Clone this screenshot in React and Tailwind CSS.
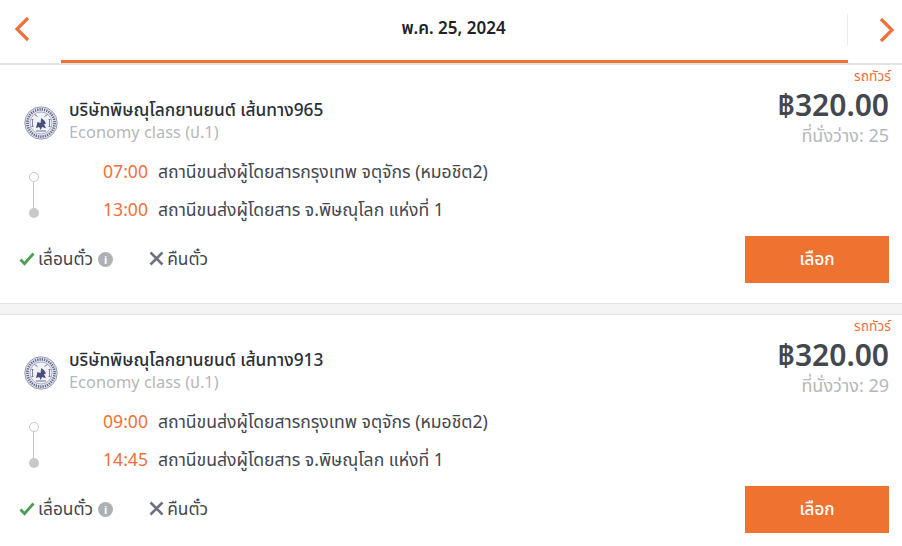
import React from 'react';

const Seal = () => (
  <svg width="34" height="34" viewBox="0 0 34 34" className="shrink-0">
    <circle cx="17" cy="17" r="16.2" fill="#e9ebf1" stroke="#8a8fa8" strokeWidth="0.9" />
    <circle cx="17" cy="17" r="13.6" fill="none" stroke="#62688c" strokeWidth="2.6" strokeDasharray="1.3 1" />
    <circle cx="17" cy="17" r="11" fill="#f1f2f6" stroke="#7b819f" strokeWidth="0.6" />
    <path d="M12 22l1.5-6 3 1 .8-5 3 2.5 1.7 3-2 .8 2 4-4-1.2-1.2 3-1.6-3z" fill="#4a5078" />
    <path d="M10.5 8.5l3 2M23.5 8.5l-3 2M12 25h10" stroke="#6f7596" strokeWidth="1" />
    <path d="M8.5 13.5v7M25.5 13.5v7M7.5 13.5h2M7.5 20.5h2M24.5 13.5h2M24.5 20.5h2" stroke="#6f7596" strokeWidth="0.9" />
  </svg>
);

const Check = () => (
  <svg width="16" height="14" viewBox="0 0 16 14" className="shrink-0">
    <path d="M1.5 7.5l4 4.2L14.5 1.5" fill="none" stroke="#4c9f52" strokeWidth="2.8" />
  </svg>
);

const Cross = () => (
  <svg width="15" height="15" viewBox="0 0 15 15" className="block shrink-0">
    <path d="M1.5 1.5l12 12M13.5 1.5l-12 12" fill="none" stroke="#6b7280" strokeWidth="2.6" />
  </svg>
);

const Info = () => (
  <span className="w-[15px] h-[15px] rounded-full bg-[#adb0b5] text-white text-[11px] font-bold flex items-center justify-center leading-none ml-[5px] mt-[1px]">i</span>
);

const Trip = ({ route, seats, depart, arrive }) => (
  <div className="h-[238px] pl-[19px] pr-[13px] flex flex-col relative">
    <div className="flex justify-between h-[87px]">
      <div className="flex items-start gap-[11px] pl-[5px] pt-[41px]">
        <Seal />
        <div className="flex flex-col mt-[-8px]">
          <span className="text-[17.3px] leading-[24px] font-medium text-[#2b2f36]">บริษัทพิษณุโลกยานยนต์ เส้นทาง{route}</span>
          <span className="text-[16.4px] leading-[22px] text-[#b5b7ba] mt-[-1px]">Economy class (ป.1)</span>
        </div>
      </div>
      <div className="flex flex-col items-end">
        <span className="text-[13.8px] leading-[20px] mt-[1px] mr-[-2px] text-[#f0703a]">รถทัวร์</span>
        <span className="text-[30px] leading-[38px] font-semibold text-[#43474e]">฿320.00</span>
        <span className="text-[18px] leading-[22px] text-[#b5b7ba]">ที่นั่งว่าง: {seats}</span>
      </div>
    </div>
    <div className="flex h-[77px]">
      <div className="w-[31px] flex flex-col items-center ml-[-1px] pt-[20px] mr-[54px]">
        <span className="w-[10px] h-[10px] rounded-full border border-[#c8c8c8] bg-white"></span>
        <span className="w-[1px] h-[26px] bg-[#c8c8c8]"></span>
        <span className="w-[10px] h-[10px] rounded-full bg-[#c8c8c8]"></span>
      </div>
      <div className="flex flex-col text-[17.6px]">
        <div className="flex h-[38px] items-center">
          <span className="w-[55px] text-[#f0703a]">{depart}</span>
          <span className="text-[#43474e]">สถานีขนส่งผู้โดยสารกรุงเทพ จตุจักร (หมอชิต2)</span>
        </div>
        <div className="flex h-[38px] items-center">
          <span className="w-[55px] text-[#f0703a]">{arrive}</span>
          <span className="text-[#43474e]">สถานีขนส่งผู้โดยสาร จ.พิษณุโลก แห่งที่ 1</span>
        </div>
      </div>
    </div>
    <div className="flex justify-between items-start mt-[7px]">
      <div className="flex items-center text-[17.4px] text-[#43474e] h-[47px] pb-[2px]">
        <Check />
        <span className="ml-[3px]">เลื่อนตั๋ว</span>
        <Info />
        <span className="ml-[36px]"><Cross /></span>
        <span className="ml-[3px]">คืนตั๋ว</span>
      </div>
      <button className="w-[144px] h-[47px] pb-[2px] bg-[#ee7230] text-white text-[17px] font-medium">เลือก</button>
    </div>
  </div>
);

export default function App() {
  return (
    <div className="w-[902px] h-[546px] overflow-hidden bg-white font-['Noto_Sans','Noto_Sans_Thai',sans-serif]">
      <header className="h-[65px] flex border-b-2 border-[#e3e3e6]">
        <div className="w-[61px] flex items-center pl-[14px] pb-[5px]">
          <svg width="16" height="26" viewBox="0 0 16 26"><path d="M14 2L3 13l11 11" fill="none" stroke="#f0703a" strokeWidth="3.2" /></svg>
        </div>
        <div className="w-[787px] h-[63px] border-b-[3px] border-[#ee7230] flex items-center justify-center pb-[4px] pr-[2px]">
          <span className="text-[17px] font-semibold text-[#1f2328]">พ.ค. 25, 2024</span>
        </div>
        <div className="flex-1 h-[63px] flex items-start">
          <span className="w-[1px] h-[31px] mt-[14px] bg-[#ebebeb] ml-[-1px]"></span>
          <svg width="16" height="26" viewBox="0 0 16 26" className="mt-[17px] ml-[31px]"><path d="M2 2l11 11L2 24" fill="none" stroke="#f0703a" strokeWidth="3.2" /></svg>
        </div>
      </header>
      <Trip route="965" seats="25" depart="07:00" arrive="13:00" />
      <div className="h-[12px] bg-[#f4f4f5] border-y border-[#e3e3e8]"></div>
      <Trip route="913" seats="29" depart="09:00" arrive="14:45" />
    </div>
  );
}
